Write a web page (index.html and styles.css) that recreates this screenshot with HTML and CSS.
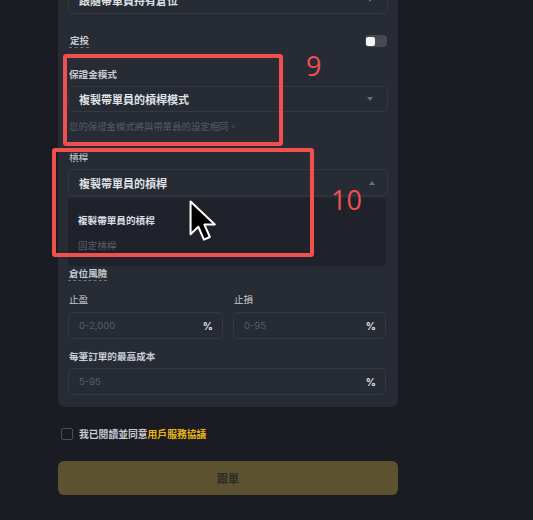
FILE: index.html
```html
<!DOCTYPE html>
<html lang="zh-Hant">
<head>
<meta charset="utf-8">
<link rel="stylesheet" href="styles.css">
</head>
<body>
<div class="page">
  <div class="panel">
    <div class="select">
      <span class="value">跟隨帶單員持有倉位</span>
      <span class="caret down"></span>
    </div>

    <div class="toggle-row">
      <span class="label dotted">定投</span>
      <span class="toggle"><span class="knob"></span></span>
    </div>

    <div class="field mode">
      <div class="label">保證金模式</div>
      <div class="select">
        <span class="value">複製帶單員的槓桿模式</span>
        <span class="caret down"></span>
      </div>
      <div class="hint">您的保證金模式將與帶單員的設定相同。</div>
    </div>

    <div class="field leverage">
      <div class="label">槓桿</div>
      <div class="select open">
        <span class="value">複製帶單員的槓桿</span>
        <span class="caret up"></span>
      </div>
      <ul class="menu">
        <li class="option">複製帶單員的槓桿</li>
        <li class="option dim">固定槓桿</li>
      </ul>
    </div>

    <div class="risk-title"><span class="label dotted">倉位風險</span></div>

    <div class="grid2">
      <div class="col">
        <div class="label">止盈</div>
        <div class="input"><span class="ph">0-2,000</span><span class="unit">%</span></div>
      </div>
      <div class="col">
        <div class="label">止損</div>
        <div class="input"><span class="ph">0-95</span><span class="unit">%</span></div>
      </div>
    </div>

    <div class="field cost">
      <div class="label strong">每筆訂單的最高成本</div>
      <div class="input"><span class="ph">5-95</span><span class="unit">%</span></div>
    </div>
  </div>

  <div class="agree">
    <span class="checkbox"></span>
    <span class="agree-text">我已閱讀並同意<span class="link">用戶服務協議</span></span>
  </div>

  <button class="submit">跟單</button>

  <div class="anno box9"></div>
  <div class="anno-num n9">9</div>
  <div class="anno box10"></div>
  <div class="anno-num n10">10</div>

  <svg class="cursor" viewBox="0 0 18 27" width="28" height="42">
    <path d="M1 1 L1 22 L6 17.2 L9.6 25.5 L13.4 23.8 L9.9 15.8 L16.6 15.8 Z" fill="#000" stroke="#fff" stroke-width="1.3" stroke-linejoin="round"/>
  </svg>
</div>
</body>
</html>
```

FILE: styles.css
```css
* { box-sizing: border-box; }
html, body {
  margin: 0;
  padding: 0;
  background: #1b1c23;
  overflow: hidden;
}
body {
  width: 533px;
  height: 520px;
  font-family: "Noto Sans CJK TC", "Noto Sans", sans-serif;
  color: #d4d7dd;
}
.page {
  position: relative;
  display: flow-root;
  width: 533px;
  height: 520px;
  padding-left: 58px;
}
.panel {
  width: 340px;
  margin-top: -26px;
  padding: 12px 10px 12px 10px;
  background: #272b34;
  border-radius: 0 0 7px 7px;
}
.select {
  height: 28px;
  border: 1px solid #333843;
  border-radius: 5px;
  display: flex;
  align-items: center;
  justify-content: space-between;
  padding: 0 14px 0 10px;
  background: #272b34;
}
.value {
  font-size: 11px;
  font-weight: 700;
  color: #dfe1e5;
  line-height: 14px;
}
.caret {
  width: 0;
  height: 0;
  border-left: 3px solid transparent;
  border-right: 3px solid transparent;
}
.caret.down { border-top: 4px solid #6a707b; }
.caret.up { border-bottom: 4px solid #6a707b; }

.toggle-row {
  margin-top: 20px;
  height: 14px;
  display: flex;
  align-items: center;
  justify-content: space-between;
  padding-left: 1px;
}
.label {
  font-size: 9.6px;
  line-height: 14px;
  color: #c9ccd3;
  padding-left: 1px;
}
.label.strong { font-weight: 700; }
.dotted {
  border-bottom: 1px dashed #6c717b;
  line-height: 13px;
  font-weight: 700;
}
.toggle {
  width: 22px;
  height: 12px;
  border-radius: 4px;
  background: #454a55;
  display: flex;
  align-items: center;
  padding-left: 1px;
  margin-right: 1px;
}
.knob {
  width: 9px;
  height: 9px;
  border-radius: 2px;
  background: #f4f5f7;
}

.field.mode { margin-top: 19px; }
.field.mode .label { font-weight: 700; }
.field.mode .select { margin-top: 5px; height: 26px; }
.hint {
  margin-top: 7px;
  font-size: 9.4px;
  line-height: 14px;
  color: #565c67;
  padding-left: 1px;
}

.field.leverage { margin-top: 17px; }
.field.leverage .select { margin-top: 5px; height: 27px; padding-right: 12px; }
.menu {
  list-style: none;
  margin: 2px 2px 0 0;
  padding: 15px 10px 14px;
  height: 68px;
  background: #1f222a;
  border-radius: 4px;
}
.option {
  font-size: 9.6px;
  line-height: 14px;
  font-weight: 700;
  color: #d9dce1;
}
.option.dim {
  margin-top: 11px;
  font-weight: 400;
  color: #575d68;
}

.risk-title {
  margin-top: 1px;
  height: 14px;
  display: flex;
  align-items: flex-start;
}

.grid2 {
  margin-top: 11px;
  display: grid;
  grid-template-columns: 155px 153px;
  column-gap: 10px;
}
.input {
  margin-top: 6px;
  height: 27px;
  border: 1px solid #333843;
  border-radius: 5px;
  display: flex;
  align-items: center;
  justify-content: space-between;
  padding: 0 9px 0 10px;
}
.ph {
  font-family: "Inter", "Noto Sans", sans-serif;
  font-size: 9.5px;
  color: #575d68;
}
.unit {
  font-family: "Inter", "Noto Sans", sans-serif;
  font-size: 10px;
  font-weight: 700;
  color: #e3e5e9;
}
.field.cost { margin-top: 10px; }
.field.cost .input { margin-top: 5px; margin-right: 2px; }

.agree {
  margin-top: 21px;
  margin-left: 3px;
  display: flex;
  align-items: center;
  height: 12px;
}
.checkbox {
  width: 12px;
  height: 12px;
  border: 1px solid #4a4f5a;
  border-radius: 2px;
  flex: none;
}
.agree-text {
  margin-left: 6px;
  font-size: 9.8px;
  line-height: 12px;
  color: #c9ccd3;
  font-weight: 700;
}
.link { color: #e9b613; }

.submit {
  display: block;
  margin-top: 21px;
  width: 340px;
  height: 34px;
  border: none;
  border-radius: 6px;
  background: #5c522f;
  font-family: "Noto Sans CJK TC", "Noto Sans", sans-serif;
  font-size: 11px;
  font-weight: 700;
  color: #2b2a27;
}

.anno {
  position: absolute;
  border: 4px solid #f24f4f;
  border-radius: 3px;
}
.box9 { left: 63px; top: 54px; width: 220px; height: 92px; }
.box10 { left: 52px; top: 148px; width: 262px; height: 109px; }
.anno-num {
  position: absolute;
  font-family: "Open Sans", "Noto Sans", sans-serif;
  font-size: 27px;
  line-height: 27px;
  color: #f24f4f;
}
.n9 { left: 306px; top: 52px; }
.n10 { left: 331px; top: 186px; }
.cursor {
  position: absolute;
  left: 189px;
  top: 200px;
}
```
